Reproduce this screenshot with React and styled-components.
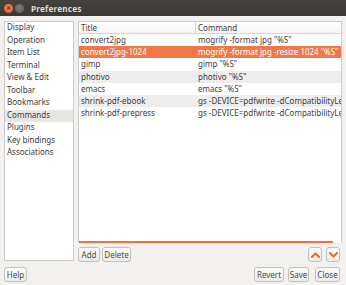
import React from "react";
import styled, { createGlobalStyle } from "styled-components";

const Global = createGlobalStyle`
  html, body { margin: 0; padding: 0; }
  body { width: 346px; height: 285px; overflow: hidden; background: #f2f1f0;
    font-family: "Noto Sans", "DejaVu Sans", sans-serif; font-size: 8px; color: #3c3c3c; }
  * { box-sizing: border-box; }
`;

const Window = styled.div`
  width: 346px; height: 285px; display: flex; flex-direction: column; background: #f2f1f0;
`;

const TitleBar = styled.div`
  height: 16px; flex: none; display: flex; align-items: center; gap: 2px; padding-left: 4px;
  background: linear-gradient(#45443f, #3a3935);
  color: #dfdbd2; font-weight: bold; font-size: 8.2px;
`;

const WinBtn = styled.div`
  width: 9px; height: 9px; border-radius: 50%; flex: none;
  background: ${p => p.$close ? "radial-gradient(circle at 50% 35%, #f08a5e, #e0562a)" : "radial-gradient(circle at 50% 35%, #7c7a74, #5c5b56)"};
  display: flex; align-items: center; justify-content: center;
  color: ${p => p.$close ? "#3c1a0c" : "#3a3935"}; font-size: 6px; line-height: 1;
`;

const TitleText = styled.span`
  margin-left: 5px; letter-spacing: 0.2px;
`;

const Body = styled.div`
  flex: 1; display: flex; flex-direction: column; padding: 5px 4px 4px 4px; gap: 5px; min-width: 0;
`;

const Main = styled.div`
  height: 241px; display: flex; gap: 4px; min-width: 0;
`;

const Sidebar = styled.div`
  width: 70px; flex: none; height: 240px; background: #fff; border: 1px solid #cdcac6;
  display: flex; flex-direction: column;
`;

const SideItem = styled.div`
  height: 12.5px; line-height: 10px; padding-left: 2px; white-space: nowrap;
  background: ${p => p.$sel ? "#e8e6e3" : "transparent"};
`;

const RightCol = styled.div`
  flex: 1; min-width: 0; display: flex; flex-direction: column; gap: 4px;
`;

const Tree = styled.div`
  height: 222px; background: #fff; border: 1px solid #cdcac6; border-bottom: none; position: relative;
  overflow: hidden; display: flex; flex-direction: column;
`;

const Header = styled.div`
  height: 12px; display: grid; grid-template-columns: 117px minmax(0, 1fr); flex: none;
  border-bottom: 1px solid #d8d6d3; background: linear-gradient(#ffffff, #f6f5f4);
`;

const HeadCell = styled.div`
  padding-left: 2px; line-height: 11px; white-space: nowrap;
  border-right: ${p => p.$sep ? "1px solid #dad8d5" : "none"};
`;

const Row = styled.div`
  height: 12.2px; display: grid; grid-template-columns: 117px minmax(0, 1fr); flex: none;
  background: ${p => p.$sel ? "#f07746" : p.$alt ? "#eeedec" : "transparent"};
  color: ${p => p.$sel ? "#ffffff" : "#3c3c3c"};
`;

const Cell = styled.div`
  padding-left: 2px; line-height: 11.5px; white-space: nowrap;
`;

const Indicator = styled.div`
  position: absolute; left: 0; bottom: 0; width: 254px; height: 2px; background: #ea7440;
`;

const BtnRow = styled.div`
  height: 15px; display: flex; gap: 2px; align-items: center; padding-right: 2px;
`;

const Spacer = styled.div` flex: 1; `;

const Button = styled.button`
  height: 15px; padding: 0; margin: 0; font-family: inherit; font-size: 8px; color: #4c4c4c;
  border: 1px solid #c4c1bc; border-radius: 3px;
  background: linear-gradient(#fbfbfa, #ecebe9);
  display: flex; align-items: center; justify-content: center; line-height: 1;
  width: ${p => p.$w}px; flex: none;
  margin-left: ${p => p.$ml ? p.$ml + "px" : "0"};
`;

const Footer = styled.div`
  height: 15px; display: flex; align-items: center; gap: 4px; padding-right: 2px;
`;

const Chevron = ({ up }) => (
  <svg width="9" height="6" viewBox="0 0 9 6">
    <path d={up ? "M1 5 L4.5 1.5 L8 5" : "M1 1 L4.5 4.5 L8 1"} stroke="#e8682d" strokeWidth="2" fill="none" strokeLinecap="round" strokeLinejoin="round" />
  </svg>
);

const sideItems = ["Display", "Operation", "Item List", "Terminal", "View & Edit", "Toolbar", "Bookmarks", "Commands", "Plugins", "Key bindings", "Associations"];
const rows = [
  ["convert2jpg", 'mogrify -format jpg "%S"'],
  ["convert2jpg-1024", 'mogrify -format jpg -resize 1024 "%S"'],
  ["gimp", 'gimp "%S"'],
  ["photivo", 'photivo "%S"'],
  ["emacs", 'emacs "%S"'],
  ["shrink-pdf-ebook", "gs -DEVICE=pdfwrite -dCompatibilityLevel=1.4"],
  ["shrink-pdf-prepress", "gs -DEVICE=pdfwrite -dCompatibilityLevel=1.4"],
];

export default function App() {
  return (
    <>
      <Global />
      <Window>
        <TitleBar>
          <WinBtn $close>✕</WinBtn>
          <WinBtn />
          <TitleText>Preferences</TitleText>
        </TitleBar>
        <Body>
          <Main>
            <Sidebar>
              {sideItems.map(s => <SideItem key={s} $sel={s === "Commands"}>{s}</SideItem>)}
            </Sidebar>
            <RightCol>
              <Tree>
                <Header>
                  <HeadCell $sep>Title</HeadCell>
                  <HeadCell>Command</HeadCell>
                </Header>
                {rows.map((r, i) => (
                  <Row key={r[0]} $sel={i === 1} $alt={i % 2 === 1}>
                    <Cell>{r[0]}</Cell>
                    <Cell>{r[1]}</Cell>
                  </Row>
                ))}
                <Indicator />
              </Tree>
              <BtnRow>
                <Button $w={22}>Add</Button>
                <Button $w={29}>Delete</Button>
                <Spacer />
                <Button $w={14}><Chevron up /></Button>
                <Button $w={14} $ml={2}><Chevron /></Button>
              </BtnRow>
            </RightCol>
          </Main>
          <Footer>
            <Button $w={23}>Help</Button>
            <Spacer />
            <Button $w={30}>Revert</Button>
            <Button $w={21}>Save</Button>
            <Button $w={25} $ml={2}>Close</Button>
          </Footer>
        </Body>
      </Window>
    </>
  );
}
